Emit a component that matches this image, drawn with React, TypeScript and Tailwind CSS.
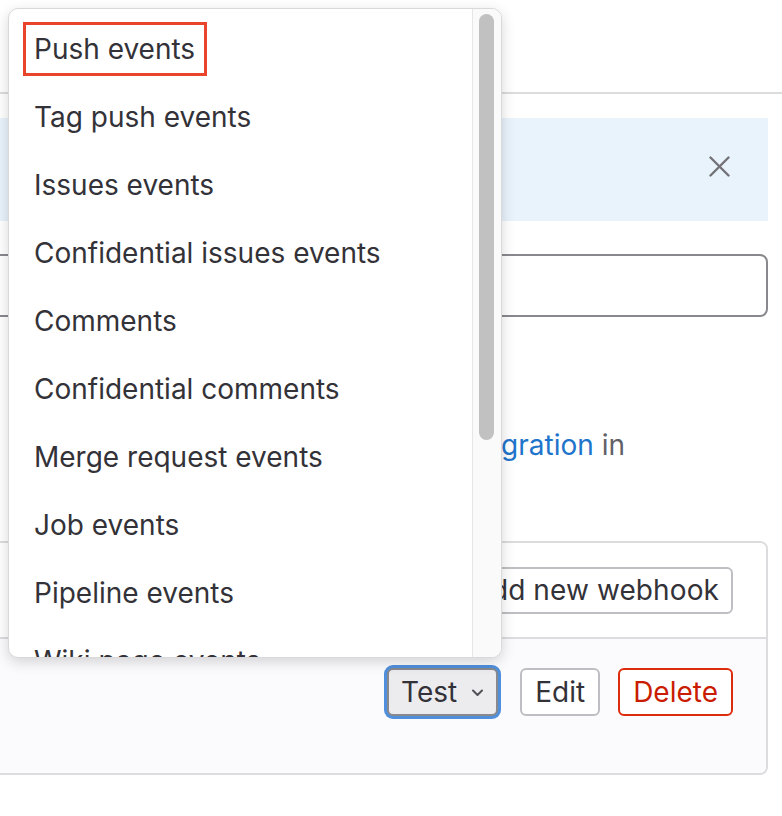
const events = [
  'Push events',
  'Tag push events',
  'Issues events',
  'Confidential issues events',
  'Comments',
  'Confidential comments',
  'Merge request events',
  'Job events',
  'Pipeline events',
  'Wiki page events',
  'Deployment events',
];

function EventsDropdown() {
  return (
    <div className="absolute left-[8px] top-[8px] flex h-[650px] w-[494px] overflow-hidden rounded-[10px] border border-[#d9d9dc] bg-white shadow-[0_4px_14px_rgba(0,0,0,0.16)]">
      <ul className="flex-1 pt-[6px]">
        {events.map((name, i) => (
          <li key={name} className="flex h-[68px] items-center pl-[25px]">
            {i === 0 ? (
              <span className="-ml-[11px] flex h-[54px] items-center border-[3px] border-[#e8452c] pl-[8px] pr-[9px]">
                {name}
              </span>
            ) : (
              <span>{name}</span>
            )}
          </li>
        ))}
      </ul>
      {/* scrollbar */}
      <div className="w-[29px] border-l border-[#e6e6e6] bg-[#fafafa] px-[6px] pt-[5px]">
        <div className="h-[426px] w-[15px] rounded-full bg-[#c1c1c1]" />
      </div>
    </div>
  );
}

export default function App() {
  return (
    <div className="relative h-[816px] w-[782px] overflow-hidden bg-white font-['Inter',sans-serif] text-[28px] leading-[36px] text-[#333238]">
      {/* page behind the dropdown */}
      <div className="h-[94px] border-b-2 border-[#dcdcde]" />

      <div className="mr-[14px] mt-[24px] flex h-[103px] items-center justify-end bg-[#e9f3fc] pb-[6px] pr-[38px]">
        <svg width="21" height="21" viewBox="0 0 21 21" className="text-[#737278]">
          <path d="M1.5 1.5l18 18M19.5 1.5l-18 18" stroke="currentColor" strokeWidth="2.4" strokeLinecap="round" />
        </svg>
      </div>

      <div className="-ml-[20px] mr-[14px] mt-[33px] h-[63px] rounded-[8px] border-2 border-[#89888d] bg-white" />

      <div className="mt-[110px] flex justify-end whitespace-nowrap pr-[157px]">
        <span className="text-[#626168]">
          Set them up via the <a className="text-[#1f75cb]">integration</a> in
        </span>
      </div>

      <div className="-ml-[20px] mr-[14px] mt-[78px] overflow-hidden rounded-[8px] border-2 border-[#dcdcde]">
        <div className="flex h-[96px] items-center justify-end border-b-2 border-[#dcdcde] bg-white pr-[33px]">
          <button className="h-[47px] rounded-[6px] border-2 border-[#bfbfc3] bg-white pl-[14px] pr-[12px] tracking-[0.1px]">
            Add new webhook
          </button>
        </div>
        <div className="flex h-[134px] items-start justify-end gap-[18px] bg-[#fbfafd] pr-[33px] pt-[29px]">
          <button className="mr-[4px] flex h-[48px] items-center gap-[12px] rounded-[6px] border-2 border-[#89888d] bg-[#ececef] pl-[12px] pr-[10px] ring-[3px] ring-[#4f8fdc]">
            Test
            <svg width="17" height="10" viewBox="0 0 17 10" className="mt-[2px] text-[#535158]">
              <path d="M4 2.5l4.5 4.5 4.5-4.5" fill="none" stroke="currentColor" strokeWidth="2" strokeLinecap="round" strokeLinejoin="round" />
            </svg>
          </button>
          <button className="h-[48px] rounded-[6px] border-2 border-[#bfbfc3] bg-white px-[13px]">
            Edit
          </button>
          <button className="h-[48px] rounded-[6px] border-2 border-[#dd2b0e] bg-white px-[13px] text-[#c91c00]">
            Delete
          </button>
        </div>
      </div>

      <EventsDropdown />
    </div>
  );
}
